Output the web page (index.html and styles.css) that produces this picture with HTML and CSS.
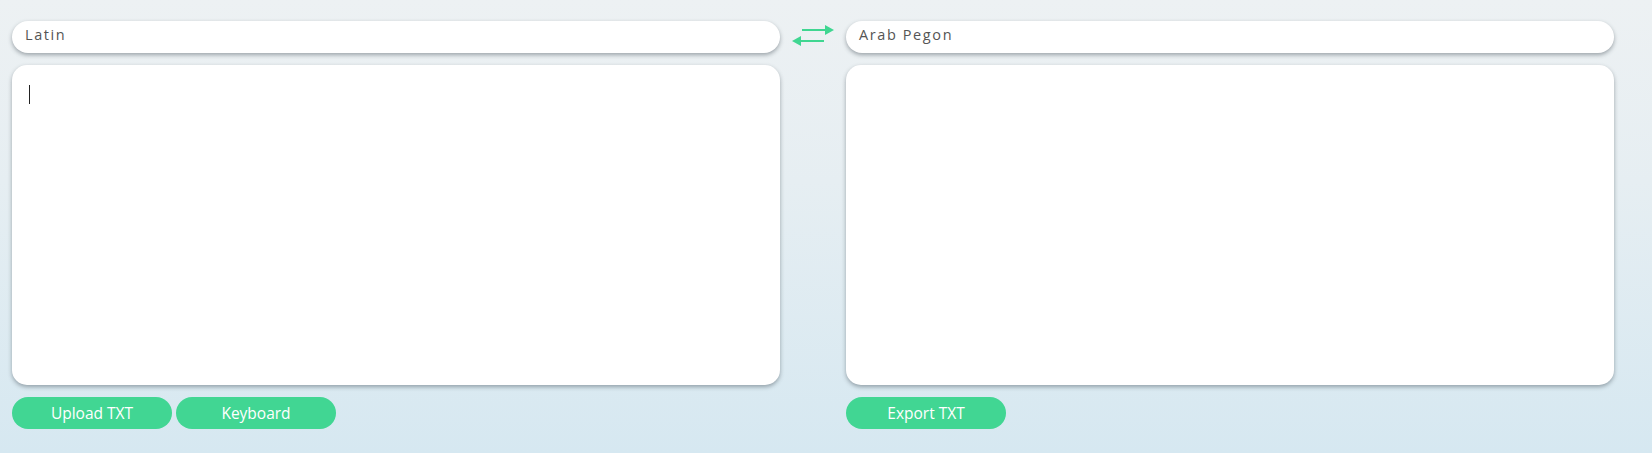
FILE: index.html
```html
<!DOCTYPE html>
<html>
<head>
<meta charset="utf-8">
<link rel="stylesheet" href="styles.css">
</head>
<body>
<div class="app">
  <div class="column">
    <div class="lang">Latin</div>
    <div class="panel"><span class="caret"></span></div>
    <div class="actions">
      <button class="btn">Upload TXT</button>
      <button class="btn">Keyboard</button>
    </div>
  </div>
  <div class="swap">
    <svg width="42" height="22" viewBox="0 0 42 22">
      <line x1="10" y1="5" x2="34" y2="5" stroke="#3fd691" stroke-width="2"/>
      <polygon points="33,0 42,5 33,10" fill="#3fd691"/>
      <line x1="8" y1="16" x2="32" y2="16" stroke="#3fd691" stroke-width="2"/>
      <polygon points="9,11 0,16 9,21" fill="#3fd691"/>
    </svg>
  </div>
  <div class="column">
    <div class="lang">Arab Pegon</div>
    <div class="panel"></div>
    <div class="actions">
      <button class="btn">Export TXT</button>
    </div>
  </div>
</div>
</body>
</html>
```

FILE: styles.css
```css
html, body {
  margin: 0;
  height: 100%;
}
body {
  background: linear-gradient(to bottom, #edf1f3 0%, #e6eef2 40%, #d6e8f1 100%);
  font-family: "Open Sans", "DejaVu Sans", sans-serif;
}
.app {
  display: flex;
  padding: 21px 0 0 12px;
}
.column {
  width: 768px;
  display: flex;
  flex-direction: column;
}
.lang {
  height: 32px;
  box-sizing: border-box;
  background: #fff;
  border-radius: 16px;
  box-shadow: 0 2px 4px rgba(60, 70, 80, 0.45);
  padding: 0 13px 5px;
  display: flex;
  align-items: center;
  font-size: 14.5px;
  letter-spacing: 1.6px;
  color: #555;
  font-weight: 400;
}
.panel {
  margin-top: 12px;
  height: 320px;
  background: #fff;
  border-radius: 15px;
  box-shadow: 0 2px 4px rgba(60, 70, 80, 0.45);
  padding: 20px 17px;
  box-sizing: border-box;
}
.caret {
  display: block;
  width: 1px;
  height: 19px;
  background: #222;
}
.actions {
  margin-top: 12px;
  display: flex;
  gap: 4px;
}
.btn {
  width: 160px;
  height: 32px;
  border: none;
  border-radius: 16px;
  background: #41d693;
  color: #fff;
  font-family: "Open Sans", "DejaVu Sans", sans-serif;
  font-size: 15.5px;
  padding: 0;
}
.swap {
  width: 66px;
  display: flex;
  justify-content: center;
  padding-top: 4px;
}
```
